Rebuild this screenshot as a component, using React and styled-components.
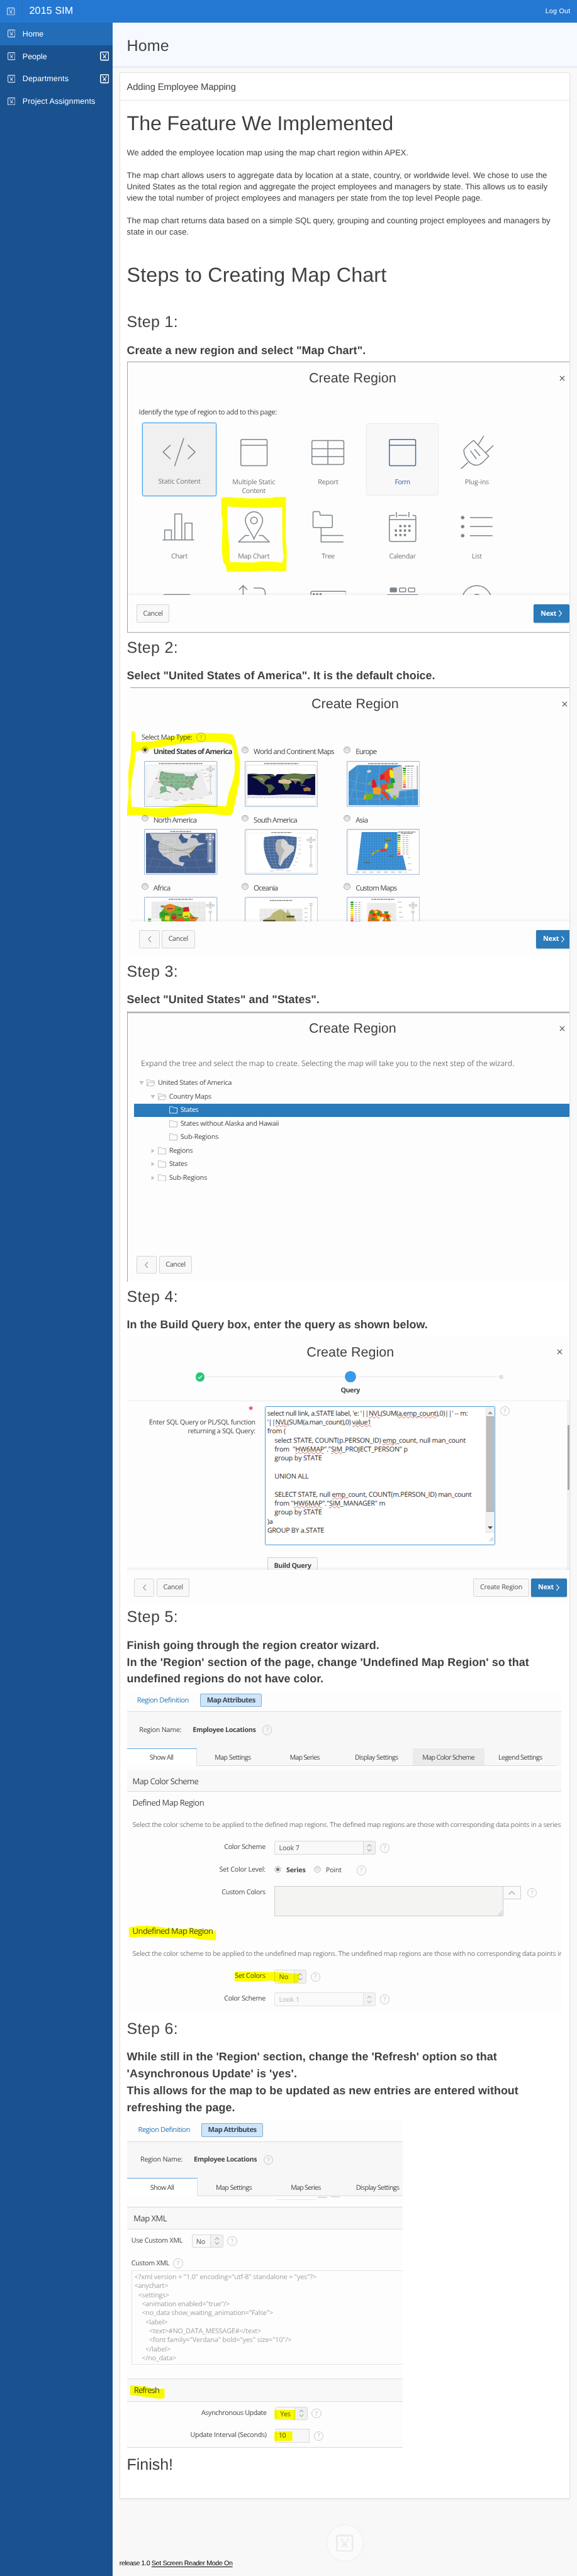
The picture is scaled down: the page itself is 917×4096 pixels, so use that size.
import React, { useLayoutEffect, useRef, useState } from "react";
import styled, { createGlobalStyle, css } from "styled-components";

const ARIAL = '"Liberation Sans", Arial, Helvetica, sans-serif';
const UI = '"Open Sans", "Noto Sans", sans-serif';

const Global = createGlobalStyle`
  html, body { margin: 0; padding: 0; background: #f8f8f8; overflow: hidden; }
  *, *::before, *::after { box-sizing: border-box; }
  body { text-rendering: geometricPrecision; font-family: ${ARIAL}; }
`;

/* ---------- text fitted to a measured width ---------- */
const FitText = styled.span`
  display: inline-block;
  white-space: pre;
  flex: none;
  text-decoration: ${(p) => (p.$link ? "underline" : "none")};
  text-underline-offset: 2px;
`;

function Fit({ w, children, ...rest }) {
  const ref = useRef(null);
  const [spacing, setSpacing] = useState(0);
  useLayoutEffect(() => {
    const el = ref.current;
    const cs = getComputedStyle(el);
    const ctx = document.createElement("canvas").getContext("2d");
    ctx.font = `${cs.fontWeight} 100px ${cs.fontFamily}`;
    const text = el.textContent;
    const natural = ctx.measureText(text).width / 100;
    setSpacing((w / parseFloat(cs.fontSize) - natural) / text.length);
  }, [w]);
  return (
    <FitText ref={ref} style={{ letterSpacing: `${spacing}em` }} {...rest}>
      {children}
    </FitText>
  );
}

/* ---------- page shell ---------- */
const Page = styled.div`
  zoom: 0.8957;
  width: 1024px;
  height: 4574px;
  display: flex;
  flex-direction: column;
  background: #f8f8f8;
  color: #404040;
`;
const TopBar = styled.header`
  height: 40px;
  flex: none;
  display: flex;
  align-items: center;
  background: #2578d2;
  color: #fff;
`;
const MenuButton = styled.div`
  width: 40px;
  height: 40px;
  display: flex;
  align-items: center;
  justify-content: center;
  border-right: 1px solid #216bbc;
`;
const Brand = styled.div`
  padding-left: 12px;
  font-size: 18px;
  flex: 1;
`;
const LogOut = styled.div`
  padding-right: 12px;
  font-size: 12px;
`;
const Columns = styled.div`
  flex: 1;
  display: flex;
  min-height: 0;
`;
const Sidebar = styled.nav`
  width: 200px;
  flex: none;
  background: #1a5290;
  color: #fff;
`;
const NavItem = styled.div`
  height: 40px;
  display: flex;
  align-items: center;
  padding: 0 7px 0 13px;
  gap: 13px;
  font-size: 14px;
  background: ${(p) => (p.$active ? "#226cb8" : "transparent")};
`;
const NavLabel = styled.div`
  flex: 1;
`;
const Main = styled.main`
  width: 824px;
  flex: none;
  display: flex;
  flex-direction: column;
`;
const TitleBar = styled.div`
  height: 79.5px;
  flex: none;
  padding: 0 25px;
  background: #f6f9ff;
  border-bottom: 1px solid #d3d8de;
  font-size: 28px;
  line-height: 84px;
`;
const Card = styled.section`
  margin: 9px 12px 0 12px;
  height: 4307px;
  flex: none;
  background: #fff;
  border: 1px solid #e3e3e3;
  border-radius: 2px;
  box-shadow: 0 2px 3px rgba(0, 0, 0, 0.06);
  overflow: hidden;
`;
const CardHeader = styled.div`
  height: 49px;
  border-bottom: 1px solid #e3e3e3;
  padding-left: 12px;
  font-size: 16.500px;
  line-height: 52px;
`;
const CardBody = styled.div`
  padding: 16.500px 0 0 12px;
`;
const H1 = styled.h1`
  margin: ${(p) => p.$m || "0"};
  font-size: 36px;
  font-weight: 400;
  line-height: 48px;
`;
const Copy = styled.p`
  margin: 0 0 20px;
  font-size: 14.400px;
  line-height: 20px;
  display: flex;
  flex-direction: column;
  align-items: flex-start;
`;
const StepTitle = styled.h2`
  margin: 0;
  height: 60px;
  padding-top: ${(p) => p.$top || 7.5}px;
  font-size: 28px;
  font-weight: 400;
  line-height: 40px;
`;
const StepText = styled.h4`
  margin: 0 0 5.500px;
  padding-top: 1.500px;
  font-size: 20px;
  font-weight: 700;
  line-height: 30px;
  display: flex;
  flex-direction: column;
  align-items: flex-start;
`;
const PageFooter = styled.footer`
  flex: 1;
  padding: 46px 12px 0;
  font-size: 12px;
  color: #000;
`;
const TopCircle = styled.div`
  width: 66px;
  height: 66px;
  margin: 0 auto;
  border: 1px solid #ececec;
  border-radius: 50%;
  background: #fbfbfb;
  display: flex;
  align-items: center;
  justify-content: center;
`;
const Release = styled.div`
  line-height: 14px;
  margin-top: -4px;
  display: flex;
  gap: 3px;
`;

function BoxGlyph({ size = 14, color = "#d7e6f6", heavy }) {
  return (
    <svg width={size} height={size} viewBox="0 0 14 14" fill="none" stroke={color} strokeWidth={heavy ? 1.5 : 1.2}>
      <rect x=".7" y=".7" width="12.6" height="12.6" rx="1.6" />
      <path d="M3.6 3.5h1.2M9.2 3.5h1.2M4.4 3.7 6.6 7.4M9.7 3.7 6.4 9M6.2 7 9 10.4M5 10.4l1-3M8 10.4l.4-3" strokeWidth="1" />
    </svg>
  );
}

/* ---------- shared dialog parts ---------- */
const Figure = styled.div`
  position: relative;
  width: ${(p) => (p.$w ? p.$w + "px" : "auto")};
  height: ${(p) => p.$h}px;
  background: #fdfdfd;
  overflow: hidden;
  display: flex;
  flex-direction: column;
  font-family: ${UI};
  font-size: 12px;
  color: #454545;
  ${(p) => p.$left && css`border-left: 1px solid #a2a2a2;`}
  ${(p) => p.$bottom && css`border-bottom: 2px solid #a8a8a8;`}
`;
const TopEdge = styled.div`
  height: ${(p) => (p.$band ? 3 : 1)}px;
  flex: none;
  margin-left: ${(p) => p.$inset || 0}px;
  background: ${(p) => (p.$band ? "#cfcfcf" : "#9d9d9d")};
  border-bottom: ${(p) => (p.$band ? "1px solid #999" : "0")};
`;
const DialogTitle = styled.div`
  height: ${(p) => p.$h}px;
  flex: none;
  width: ${(p) => p.$w}px;
  display: flex;
  align-items: flex-start;
  justify-content: center;
  font-family: ${ARIAL};
  font-size: 24px;
  line-height: 30px;
  padding-top: ${(p) => p.$top}px;
  color: #404040;
`;
const Closer = styled.svg`
  position: absolute;
  top: ${(p) => p.$y - 5}px;
  left: ${(p) => p.$x - 5}px;
`;
const CloseX = ({ x, y }) => (
  <Closer $x={x} $y={y} width="10" height="10" viewBox="0 0 10 10" stroke="#4a4a4a" strokeWidth="1.3">
    <path d="M1 1l8 8M9 1l-8 8" />
  </Closer>
);
const DialogBody = styled.div`
  height: ${(p) => p.$h}px;
  flex: none;
  overflow: hidden;
  padding-left: ${(p) => p.$pl || 0}px;
  position: relative;
  &::after {
    content: "";
    position: absolute;
    left: ${(p) => p.$inset || 0}px;
    right: 0;
    bottom: 0;
    height: 5px;
    background: linear-gradient(rgba(0, 0, 0, 0), rgba(0, 0, 0, 0.05));
    display: ${(p) => (p.$plain ? "none" : "block")};
  }
`;
const DialogFooter = styled.div`
  flex: 1;
  display: flex;
  align-items: flex-start;
  gap: 4px;
  padding-top: ${(p) => p.$top || 17}px;
  padding-left: ${(p) => p.$pl}px;
`;
const Spacer = styled.div`
  width: ${(p) => p.$w}px;
  flex: none;
`;
const Gap = styled.div`
  height: ${(p) => p.$h}px;
  flex: none;
`;
const Button = styled.div`
  width: ${(p) => p.$w}px;
  height: 32px;
  flex: none;
  display: flex;
  align-items: center;
  justify-content: center;
  gap: 3px;
  border-radius: 2px;
  border: 1px solid ${(p) => (p.$primary ? "#2873ae" : "#d6d6d6")};
  background: ${(p) => (p.$primary ? "#2b7ab9" : "#f8f8f8")};
  color: ${(p) => (p.$primary ? "#fff" : "#505050")};
  font-weight: ${(p) => (p.$primary ? 700 : 400)};
  box-shadow: ${(p) => (p.$primary ? "0 1px 2px rgba(43,122,185,.4)" : "none")};
`;
const Next = () => (
  <Button $w={63} $primary>
    <Fit w={28}>Next</Fit>
    <svg width="8" height="12" viewBox="0 0 8 12" fill="none" stroke="#fff" strokeWidth="1.3"><path d="M1.5 0.8 6 6 1.5 11.2" /></svg>
  </Button>
);
const Back = () => (
  <Button $w={36}>
    <svg width="8" height="12" viewBox="0 0 8 12" fill="none" stroke="#555" strokeWidth="1.1"><path d="M6.5 1 2 6l4.500 5" /></svg>
  </Button>
);
const Cancel = () => <Button $w={58.500}><Fit w={35}>Cancel</Fit></Button>;

const HelpCircle = styled.span`
  width: 17px;
  height: 17px;
  flex: none;
  border: 1px solid ${(p) => (p.$olive ? "#b9b544" : "#c6c6c6")};
  border-radius: 50%;
  display: inline-flex;
  align-items: center;
  justify-content: center;
  font-size: 11px;
  line-height: 15px;
  color: ${(p) => (p.$olive ? "#a5a030" : "#bcbcbc")};
  margin-left: ${(p) => p.$ml || 0}px;
`;
const Help = (p) => <HelpCircle {...p}>?</HelpCircle>;

const Radio = styled.span`
  width: 12px;
  height: 12px;
  flex: none;
  border-radius: 50%;
  border: 1px solid #a9a9a9;
  background: ${(p) => (p.$on ? "radial-gradient(circle, #444 0 2.5px, #e4e4e4 3.2px)" : "linear-gradient(#d5d5d5, #eee)")};
  opacity: ${(p) => (p.$soft ? 0.7 : 1)};
`;
const Marker = styled.svg`
  position: absolute;
  left: ${(p) => p.$x}px;
  top: ${(p) => p.$y}px;
  mix-blend-mode: multiply;
  pointer-events: none;
`;

/* ---------- step 1 ---------- */
const Prompt = styled.div`
  font-size: 12.500px;
  line-height: 20px;
  padding-left: 20px;
  height: ${(p) => p.$h}px;
`;
const TileGrid = styled.div`
  margin-left: 26px;
  display: grid;
  grid-template-columns: repeat(5, 132px);
  grid-auto-rows: 132px;
`;
const Tile = styled.div`
  margin: ${(p) => (p.$on ? 0.5 : 1.5)}px;
  border-radius: 3px;
  display: flex;
  flex-direction: column;
  align-items: center;
  padding-top: ${(p) => (p.$on ? 19 : 19)}px;
  color: #757575;
  line-height: 16px;
  border: 1px solid transparent;
  ${(p) => p.$on && css`border: 2px solid #389bea; background: #f0f0f0; box-shadow: 0 0 3px #9fd0f7;`}
  ${(p) => p.$hover && css`border-color: #ebebeb; background: #f8f8f8; color: #3c5f9c;`}
`;
const TileIcon = styled.svg`
  width: 64px;
  height: 64px;
  margin-bottom: 13px;
  flex: none;
  fill: none;
  stroke: ${(p) => p.$c || "#7d848a"};
  stroke-width: 5;
`;

/* Icons use a 192-unit box centred on the tile, three units to a pixel. */
const ICONS = {
  code: <><path d="M50 59 11 96l39 38M142 59l39 37-39 38M121 22 72 172" /></>,
  window: <><rect x="26" y="26" width="140" height="140" rx="8" /><path d="M26 57h140" /></>,
  report: <><rect x="9" y="32" width="170" height="127" rx="8" /><path d="M94 32v127M9 75h170M9 117h170" /></>,
  plug: <><path d="M79 31 160 115 128 148Q96 176 62 152Q24 116 28 80Q40 62 79 31ZM104 54 133 8M145 96 184 58M50 148 12 182M62 86l32 44M84 78l30 36" /></>,
  chart: <><path d="M8 166h168M19 165v-52h36v52M73 165V28h37v137M127 165V76h38v89" strokeLinejoin="round" /></>,
  pin: <><path d="M96 161C85 128 50 96 50 62a46 46 0 0 1 92 0c0 34-35 66-46 99z" /><circle cx="96" cy="62" r="18" /><path d="M70 142H50L14 177h164l-36-35h-20" strokeLinejoin="round" /></>,
  tree: <><path d="M15 22q0-7 7-7h22q8 0 8 7v8q0 4 4 4h55q7 0 7 7v52q0 7-7 7H22q-7 0-7-7zM58 100v77h119M58 142h119" /></>,
  calendar: <><path d="M55 35H34q-8 0-8 8v123q0 8 8 8h125q8 0 8-8V43q0-8-8-8h-10M73 35h48M26 58h141M64 17v28M130 17v28" /><g fill="#7d848a" stroke="none">{[[79, 86], [103, 86], [127, 86], [55, 110], [79, 110], [103, 110], [127, 110], [55, 134], [79, 134], [103, 134]].map(([x, y]) => <rect key={x + "-" + y} x={x} y={y} width="12" height="12" rx="2" />)}</g></>,
  list: <><path d="M60 47h120M60 95h120M60 143h120" /><g fill="#7d848a" stroke="none"><circle cx="21" cy="47" r="9" /><circle cx="21" cy="95" r="9" /><circle cx="21" cy="143" r="9" /></g></>,
  r1: <path d="M8 76q0-14 14-14h124q14 0 14 14" />,
  r2: <path d="M38 90V14M16 36l22-22 22 22M94 27h36q24 0 26 26v40" />,
  r3: <><path d="M4 80V52q0-8 8-8h172q8 0 8 8v28" /><g fill="#7d848a" stroke="none"><circle cx="19" cy="60" r="6" /><circle cx="37" cy="60" r="6" /><circle cx="55" cy="60" r="6" /></g></>,
  r4: <><rect x="31" y="27" width="33" height="20" rx="3" fill="#7d848a" /><rect x="80" y="27" width="33" height="20" rx="3" /><rect x="128" y="27" width="33" height="20" rx="3" /><path d="M16 66q0-2 4-2h154q4 0 4 2" strokeWidth="7" /></>,
  r5: <><circle cx="96" cy="92" r="78" /><circle cx="96" cy="82" r="22" /></>,
};
const TILES = [
  ["code", [["Static Content", 75]], { $on: true }],
  ["window", [["Multiple Static", 76], ["Content", 42]], {}],
  ["report", [["Report", 36]], {}],
  ["window", [["Form", 27]], { $hover: true }],
  ["plug", [["Plug-ins", 43]], {}],
  ["chart", [["Chart", 29]], {}],
  ["pin", [["Map Chart", 56]], {}],
  ["tree", [["Tree", 23]], {}],
  ["calendar", [["Calendar", 47]], {}],
  ["list", [["List", 18]], {}],
  ["r1", [], {}], ["r2", [], {}], ["r3", [], {}], ["r4", [], {}], ["r5", [], {}],
];

function RegionTypes() {
  return (
    <Figure $h={481} $left $bottom>
      <TopEdge />
      <DialogTitle $w={799} $h={79} $top={13.500}><Fit w={155}>Create Region</Fit></DialogTitle>
      <CloseX x={771} y={29} />
      <DialogBody $h={334}>
        <Prompt $h={27}><Fit w={245}>Identify the type of region to add to this page:</Fit></Prompt>
        <TileGrid>
          {TILES.map(([icon, lines, flags], i) => (
            <Tile key={i} {...flags}>
              <TileIcon viewBox="0 0 192 192" $c={flags.$hover && "#3f6aa6"}>{ICONS[icon]}</TileIcon>
              {lines.map(([t, w]) => <Fit key={t} w={w}>{t}</Fit>)}
            </Tile>
          ))}
        </TileGrid>
      </DialogBody>
      <DialogFooter $pl={16}>
        <Cancel />
        <Spacer $w={638.500} />
        <Next />
      </DialogFooter>
      <Marker $x={165} $y={239} width="120" height="140" viewBox="450 335 360 420">
        <path fill="#ff0" fillRule="evenodd" d="M456 345Q470 338 500 341L600 347L720 345L745 339H800L799 480L798 560L804 620L802 735L700 732L610 738H485L480 705L468 690L460 650L458 600L463 470L456 430ZM489 388Q500 392 540 393L640 397L700 397L780 394L781 570L784 620L787 660L780 688L730 683L670 682L630 688L502 686L497 600L490 500L487 440Z" />
      </Marker>
    </Figure>
  );
}

/* ---------- step 2 ---------- */
const PromptRow = styled.div`
  display: flex;
  align-items: center;
  height: 22px;
  padding-left: 26px;
  gap: 7px;
  font-size: 12.500px;
`;
const MapGrid = styled.div`
  display: grid;
  grid-template-columns: 178px 181px 160px;
  grid-auto-rows: 121px;
  padding-left: 26px;
`;
const MapLabel = styled.div`
  height: 29px;
  display: flex;
  align-items: flex-start;
  gap: 9px;
  padding-top: 4px;
  font-size: 13px;
  line-height: 19px;
  font-weight: ${(p) => (p.$on ? 700 : 400)};
`;
const Thumb = styled.svg`
  display: block;
  margin-left: 5px;
  width: 130px;
  height: 82px;
`;
const frame = (x, y) => <rect x={x + 2} y={y + 2} width="386" height="241" rx="5" fill="#fff" stroke="#a3bcd8" strokeWidth="4" />;
const cap = (x, y, w) => <path d={`M${x} ${y}h${w}`} stroke="#555" strokeWidth="5" strokeDasharray="9 3 14 3 6 2" opacity=".75" />;
const LEG = ["#0a7a1c", "#2d9a20", "#62b425", "#a5cf1f", "#e4e81b", "#fdf100", "#fdb813", "#f7941d", "#f15a24", "#e01b24"];
const Legend = ({ x, y, n = 10, dx = 22 }) => (
  <g>
    {LEG.slice(0, n).map((c, i) => <rect key={i} x={x} y={y + i * 11} width="15" height="7" fill={c} />)}
    {LEG.slice(0, n).map((c, i) => <path key={i} d={`M${x + dx} ${y + 4 + i * 11}h38`} stroke="#9a9a9a" strokeWidth="3" strokeDasharray="12 6" />)}
  </g>
);
const Slider = ({ x, y, h = 110, pad = true }) => (
  <g stroke="#a5a5a5" fill="#f4f4f4" strokeWidth="2">
    {pad && [[0, -46], [-16, -34], [0, -34], [16, -34], [0, -22]].map(([a, b], i) => <rect key={i} x={x + a - 5} y={y + b - 4} width="10" height="8" />)}
    <path d={`M${x} ${y}v${h}`} strokeWidth="5" stroke="#cfcfcf" />
    <rect x={x - 6} y={y - 5} width="12" height="11" /><rect x={x - 6} y={y + h - 8} width="12" height="11" />
  </g>
);
const gridLines = (x0, y0, x1, y1, s) => {
  let d = "";
  for (let x = x0; x <= x1; x += s) d += `M${x} ${y0}V${y1}`;
  for (let y = y0; y <= y1; y += s) d += `M${x0} ${y}H${x1}`;
  return d;
};

const Usa = () => (
  <Thumb viewBox="93 180 390 246">
    {frame(93, 180)}{cap(172, 194, 232)}
    <rect x="103" y="202" width="370" height="213" fill="#f7f7f7" stroke="#ddd" strokeWidth="2" />
    <path d="M172 226Q280 250 396 230L440 364Q270 412 112 366Z" fill="#ececec" />
    <path d="M182 238Q240 250 304 250L312 262 330 262 358 262 368 246 376 262 358 290 352 312 346 318 352 334 338 328 332 318 306 322 286 320 266 338 254 322 228 314 200 310 184 300 174 276Z" fill="#7fb58d" stroke="#55855f" strokeWidth="2" />
    <path d="M182 316l26-2 8 26 18 6-24-2-14 4-22 8 8-14-6-12z" fill="#7fb58d" />
    <path d="M200 244v62M226 248v66M254 250v68M280 252v68M306 258v60M328 264v54M178 264h176M176 284h180M200 302h150" stroke="#a8c9b0" strokeWidth="2" fill="none" />
    <g fill="#b56d5f">{[[196, 264], [214, 272], [240, 262], [188, 292], [232, 304], [262, 332], [300, 288], [316, 268], [330, 284], [344, 266], [370, 264], [318, 296], [306, 310], [348, 326], [154, 270], [168, 290], [270, 288], [184, 236], [338, 300]].map(([x, y], i) => <rect key={i} x={x} y={y} width="11" height="5" />)}</g>
    <path d="M110 370h26M150 380h28M196 388h28M246 390h28M296 388h24M340 384h22M386 378h22M396 228h18M406 246h18M416 264h16M428 284h14" stroke="#b5b5b5" strokeWidth="3" strokeDasharray="8 2" />
    <path d="M218 342l18 6M280 348l20 8" stroke="#777" strokeWidth="3" />
    <Slider x={446} y={258} h={96} />
  </Thumb>
);
const World = () => (
  <Thumb viewBox="627 180 390 246">
    {frame(627, 180)}{cap(730, 194, 184)}
    <rect x="637" y="202" width="370" height="214" fill="#fff" stroke="#ccc" strokeWidth="2" />
    <rect x="642" y="250" width="360" height="112" fill="#08093f" />
    <path d="M642 250q20-6 60 0t60 8l10-10 20 14-20 2-34-6zM830 254l60-8 50 4 62 4v8l-60 2-100-4z" fill="#44603a" />
    <path d="M676 262q36-10 78-4l14 14-22 4-16 18 4 12 12 2-6 4-24-14-26-22-30-12z" fill="#6b7a48" /><path d="M690 268l30 2 10 16-20-6z" fill="#b09a6c" />
    <path d="M744 304l26 2 18 18-16 14-10 14-10-4-2-24-10-10z" fill="#526b34" />
    <path d="M826 260l40-8 70-2 60 8-20 14-26 4-10 20-10 10-10-16-14-2-8 16-14-18-30-8-40 0z" fill="#66784a" />
    <path d="M806 282l30-6 34 6 8 12-16 10-30-2-26-6z" fill="#d9c096" /><path d="M826 300l36 2 4 12-10 20-12 4-8-22z" fill="#5f7a3f" />
    <path d="M868 274l44 2 20 6-24 2-36-2z" fill="#c7b184" /><path d="M938 326l22-8 18 8-2 16-16-2-18 2z" fill="#a5764a" /><path d="M918 304l20 4 20 6-30-2z" fill="#52703c" />
    <path d="M642 362q30-4 60 2t60 0 70-6 80 0 90 4v12H642z" fill="#e6e9f1" /><path d="M770 246l24-4 10 4-14 14z" fill="#fff" />
    <path d="M642 376h360" stroke="#ccc" strokeWidth="4" strokeDasharray="16 5" />
  </Thumb>
);
const Europe = () => (
  <Thumb viewBox="1170 180 390 246">
    {frame(1170, 180)}{cap(1284, 194, 160)}
    <path d="M1226 202H1460V416H1180V238Z" fill="#3f8fcd" /><path d="M1440 330h110v86H1440z" fill="#3f8fcd" />
    <path d="M1180 330q180 40 370 0M1180 280q180 60 370 0M1180 380q180 10 370-10M1230 202q-20 100 0 214M1290 202q-30 100-10 214M1350 202q-20 110 0 214M1240 230l-60 170M1480 330l10 86M1520 330l6 86" stroke="#86bbe2" strokeWidth="1.500" fill="none" />
    <path d="M1416 218l50-14h84v124l-100 12-4 34-36 2-24-34 28-40z" fill="#c7c7c9" />
    <path d="M1396 218l16 0 4 16-12 10-2 26-8 26-14-2-10-18-22 2v-22l14-10z" fill="#e8401f" /><path d="M1348 256l22-4 2 24-22 6z" fill="#e01b24" />
    <path d="M1398 226l18 4 6 34-16 8-8-14z" fill="#f1ea1c" /><path d="M1404 272l20 2 4 22-22 4z" fill="#169a34" />
    <path d="M1306 282l12-4 10 26 2 14-26 4z" fill="#e01b24" /><path d="M1286 294l14-4-2 18-14-2z" fill="#7fa870" />
    <path d="M1308 326l34-10 12 14-6 30-36-4z" fill="#f7a01d" /><path d="M1276 352l38 4-10 30-36 0-6-18z" fill="#6cb522" /><path d="M1264 362l10-4-4 28-10-4z" fill="#f7a01d" />
    <path d="M1350 306l34-4 4 26-30 12z" fill="#ea4a22" /><path d="M1384 304l34-4 2 24-30 4z" fill="#5cae2c" /><path d="M1352 346l24-4 22 40-8 8-20-26z" fill="#e8401f" /><path d="M1352 374l10 0-2 16-8-4z" fill="#e8401f" />
    <path d="M1376 330l40 2-10 14-28 0z" fill="#cfe043" /><path d="M1416 362l20 4-4 22-16-6z" fill="#7ec02a" /><path d="M1276 234l18-8 8 12-18 6z" fill="#c5d3dc" />
    <rect x="1466" y="200" width="76" height="128" fill="#fff" />
    <Legend x={1470} y={216} />{cap(1480, 208, 48)}
  </Thumb>
);
const NorthAm = () => (
  <Thumb viewBox="93 543 390 246">
    {frame(93, 543)}{cap(232, 557, 112)}
    <rect x="103" y="565" width="370" height="214" fill="#45608e" />
    <path d="M103 700q180 20 370 0M103 740q180 20 370 0M103 650q180 10 370 0M140 690L110 779M180 720l-30 59M240 740l-10 39M310 740v39M360 680l30 99M400 650l70 129M150 565q-40 60-47 120" stroke="#7288b0" strokeWidth="1.500" fill="none" />
    <path d="M124 568H290L276 590 296 620 320 616 330 590 370 592 384 616 420 620 372 636 350 660 334 674 340 700 326 684 290 688 278 700 280 718 308 722 300 742 250 728 220 700 196 688 172 660 168 632 176 610 140 600Z" fill="#c9cacc" />
    <path d="M292 570l60 0-20 28-26-8zM350 570l40 0-14 10z" fill="#d9dadc" />
    <path d="M168 634L288 660 372 636M176 620L292 662 352 648M186 680L290 656 340 680M172 650L300 664" stroke="#8b887c" strokeWidth="2" fill="none" /><path d="M360 632l-16 34-20 6 14 20" stroke="#d7ad45" strokeWidth="4" fill="none" strokeDasharray="8 3" />
    <path d="M172 640h160M180 662h150M220 634v70M250 640v80M196 592h60v34h-60z" stroke="#e4e4e4" strokeWidth="2" fill="none" />
    <path d="M420 570h46v34H420zM430 606h30v116h-30z" fill="#8597b8" /><Slider x={444} y={622} h={92} />
  </Thumb>
);
const SouthAm = () => (
  <Thumb viewBox="625 543 394 246">
    <rect x="627" y="545" width="390" height="241" rx="9" fill="#fff" stroke="#a3bcd8" strokeWidth="4" />{cap(768, 561, 108)}
    <rect x="637" y="565" width="370" height="212" fill="none" stroke="#e3e3e3" strokeWidth="2" />
    <path d="M730 586Q814 572 904 586Q908 680 862 752Q810 760 768 754Q716 670 730 586Z" fill="#4a6a9a" />
    <path d="M732 600h170M728 616h176M728 632h174M730 648h170M734 664h162M738 680h154M744 696h142M750 712h128M756 728h116M762 742h104M750 582q0 100 36 172M778 580q0 100 20 174M880 582q0 100-34 172M850 582v170" stroke="#9fb2cf" strokeWidth="1.500" fill="none" strokeDasharray="12 4" />
    <path d="M800 600l34-4 20 16 4 12 34 12-4 24-16 14-20 20-16 14-8 16-10 18-8-8 4-40-4-26-18-22-2-24z" fill="#d7d7d7" /><path d="M796 604l28-4-4 34 20 24-14 24-14 58-6-10 2-42-18-30z" fill="#b6b6b8" />
    <path d="M912 590h14M914 606h14M914 628h14M914 652h14M912 676h14M902 698h12M896 720h14M886 738h12M760 768h22M792 763h44M850 768h22" stroke="#aaa" strokeWidth="3" strokeDasharray="7 2" />
    <Slider x={981} y={636} h={106} />
  </Thumb>
);
const Asia = () => (
  <Thumb viewBox="1170 543 390 246">
    {frame(1170, 543)}
    <rect x="1180" y="552" width="370" height="228" fill="none" stroke="#ececec" strokeWidth="2" />
    <path d="M1250 560H1440L1488 762H1226Z" fill="#3389cf" />
    <clipPath id="asiaClip"><path d="M1250 560H1440L1488 762H1226Z" /></clipPath>
    <path clipPath="url(#asiaClip)" d={gridLines(1226, 560, 1490, 762, 14)} stroke="#62a6dd" strokeWidth="1.500" />
    <path d="M1372 606l18-16 20 8-14 10-22 4z" fill="#7b9a3e" /><path d="M1374 622l12-4 4 16-10 18-8-2z" fill="#f6dd2b" /><path d="M1352 650l26-2 4 12-18 4-14-2z" fill="#ec3323" /><path d="M1304 676l20-18 20-2-8 8-22 10-6 12z" fill="#e2b52e" /><path d="M1318 662l16-4-4 8-12 4z" fill="#46a135" />
    <path d="M1264 723h32M1394 688h26M1372 604h36" stroke="#5b6770" strokeWidth="6" />
    <rect x="1440" y="552" width="100" height="132" fill="#fff" /><Legend x={1441} y={574} dx={26} />{cap(1444, 560, 92)}{cap(1460, 567, 60)}
    <path d="M1216 773h272" stroke="#b5b5b5" strokeWidth="4" strokeDasharray="20 18" /><path d="M1492 696h18M1496 728h18M1498 762h20" stroke="#b5b5b5" strokeWidth="3" />
  </Thumb>
);
const Africa = () => (
  <Thumb viewBox="93 906 390 246">
    {frame(93, 906)}{cap(224, 919, 128)}
    <rect x="134" y="934" width="286" height="200" fill="#ececec" /><path d={gridLines(134, 934, 420, 1134, 28)} stroke="#e0e0e0" strokeWidth="2" />
    <path d="M206 952l24-8 28 8 46 14 26-4 4 26 24 24 24 4-30 40H200l-24-34-2-26 16-18z" fill="#5cae2c" />
    <path d="M208 950l24-6 26 8-2 24-30 16-24-20z" fill="#f07f22" /><path d="M302 962l28-2 4 24-32 2z" fill="#e01b24" /><path d="M182 952h20v10h-20z" fill="#8a7a60" />
    <path d="M300 986l34-2 6 30-30 6-12-10z" fill="#f6e51c" /><path d="M336 1006l26 8 20 4-20 20-30-6z" fill="#ea7a25" /><path d="M204 1008l26 2-2 24-24-4z" fill="#f6d51c" /><path d="M238 1006l30-2-8 28-20-6z" fill="#d8322a" /><path d="M254 1024l44-6 16 18-60 2z" fill="#ee5a24" /><path d="M176 990l26-8 2 34-22-4z" fill="#2e9e2c" />
    <path d="M216 969h30M270 974h18M306 972h24M202 997h20M240 999h22M274 1002h22M308 1010h20M240 1018h24M342 1018h20" stroke="#585040" strokeWidth="5" />
    <rect x="113" y="1021" width="72" height="20" fill="#fff" opacity=".8" /><rect x="114" y="1022" width="16" height="6" fill="#0a7a1c" /><rect x="114" y="1033" width="16" height="6" fill="#2d9a20" />
    <Slider x={446} y={986} h={120} />
  </Thumb>
);
const Oceania = () => (
  <Thumb viewBox="625 906 394 246">
    <rect x="627" y="908" width="390" height="241" rx="9" fill="#fff" stroke="#a3bcd8" strokeWidth="4" />{cap(760, 924, 122)}
    <rect x="706" y="970" width="230" height="150" fill="#ececec" /><path d={gridLines(706, 970, 936, 1120, 30)} stroke="#dedede" strokeWidth="2" />
    <path d="M726 1040v-12l38-18 14-20 24-12 12-6 14 4 10 12 12 2 6-18 8 20 12 14 20 18 10 22v20H726z" fill="#beb878" /><path d="M835 980v60M866 990v50" stroke="#96905a" strokeWidth="2" />
    <path d="M850 1011h42M724 1034h66" stroke="#4d4a38" strokeWidth="9" /><path d="M946 968h16M946 990h16M946 1014h16M946 1034h16" stroke="#aaa" strokeWidth="3" />
    <Slider x={981} y={945} h={120} pad={false} />
  </Thumb>
);
const Custom = () => (
  <Thumb viewBox="1170 906 390 246">
    {frame(1170, 906)}{cap(1302, 919, 124)}
    <rect x="1278" y="938" width="156" height="180" fill="#ececec" />
    <Legend x={1191} y={932} />
    <path d="M1290 988q4-14 20-14l6 6 18-6 20 8 6 14 24 0 18 6 4 12-10 0 10 22-8 20h-30l-8-20 12-20-16-4-12 14-4 26-36 10-22-18 2-24z" fill="#e2711f" />
    <path d="M1290 988l14-10 12 12-14 8zM1340 984l10 8-10 14-12-6zM1302 1016l22 4-6 12-18-6zM1368 984l24 0-4 14-16-2zM1378 1016l16 2-8 14z" fill="#2e9a2c" />
    <path d="M1318 982l14-4 2 12-14 6zM1332 1010l22-2-8 20-12-4zM1396 996l12 6-8 10zM1372 1020l14 6-8 10z" fill="#f1e11c" /><path d="M1304 996l22-2-4 14-14 2zM1340 1000l18 2-8 10zM1382 1000l16 6-6 14-14-8z" fill="#dd2a24" />
    <path d="M1442 934h20M1446 962h18M1448 988h16M1450 1014h20" stroke="#aaa" strokeWidth="3" /><Slider x={1523} y={986} h={120} />
  </Thumb>
);
const MAPS = [
  ["United States of America", 140, Usa], ["World and Continent Maps", 143, World], ["Europe", 37, Europe],
  ["North America", 77, NorthAm], ["South America", 77, SouthAm], ["Asia", 21.500, Asia],
  ["Africa", 30, Africa], ["Oceania", 43, Oceania], ["Custom Maps", 73, Custom],
];

function MapTypes() {
  return (
    <Figure $h={478}>
      <TopEdge $inset={6} />
      <DialogTitle $w={810} $h={77} $top={13.500}><Fit w={155}>Create Region</Fit></DialogTitle>
      <CloseX x={777} y={29} />
      <DialogBody $h={337} $inset={6}>
        <PromptRow><Fit w={90}>Select Map Type:</Fit><Help $olive /></PromptRow>
        <Gap $h={1} />
        <MapGrid>
          {MAPS.map(([name, w, Pic], i) => (
            <div key={name}>
              <MapLabel $on={i === 0}><Radio $on={i === 0} /><Fit w={w}>{name}</Fit></MapLabel>
              <Pic />
            </div>
          ))}
        </MapGrid>
      </DialogBody>
      <DialogFooter $pl={22} $top={16}>
        <Back /><Cancel /><Spacer $w={598} /><Next />
      </DialogFooter>
      <Marker $x={0} $y={69} width="205" height="165" viewBox="0 0 615 495">
        <path fill="#ff0" fillRule="evenodd" d="M24 27H42L46 82Q150 84 250 52Q350 30 440 36Q530 36 564 44L580 90L590 140L602 190L598 290L580 380L562 465Q550 478 520 474Q430 462 380 464Q300 470 200 486L60 474L0 476V440L8 360L6 250L20 150ZM46 132Q150 116 200 106Q300 90 400 84Q520 80 545 92L556 100L566 130L574 200L572 250L560 300L540 360L527 425Q450 422 400 412Q320 408 240 430Q150 442 60 430L22 428L18 350L30 250L40 200Z" />
      </Marker>
    </Figure>
  );
}

/* ---------- step 3 ---------- */
const Hint = styled.div`
  font-size: 13.500px;
  line-height: 20px;
  color: #7a7a7a;
  height: 33px;
  padding-left: 24px;
`;
const TreeRow = styled.div`
  height: 24px;
  margin-left: 12px;
  padding-left: ${(p) => 7 + p.$level * 20}px;
  display: flex;
  align-items: center;
  gap: 5px;
  background: ${(p) => (p.$on ? "#2b7ab9" : "transparent")};
  color: ${(p) => (p.$on ? "#fff" : "#454545")};
`;
const TREE = [
  [0, "open", "United States of America", 131],
  [1, "open", "Country Maps", 75],
  [2, "leaf", "States", 32, true],
  [2, "leaf", "States without Alaska and Hawaii", 175],
  [2, "leaf", "Sub-Regions", 67.500],
  [1, "shut", "Regions", 42],
  [1, "shut", "States", 32],
  [1, "shut", "Sub-Regions", 67.500],
];
const Folder = ({ open, color }) => (
  <svg width="15" height="13" viewBox="0 0 15 13" fill="none" stroke={color} strokeWidth="1">
    {open ? <path d="M.5 12V1h5l1.500 2h6v3M.5 12h11.500l2.500-6.500h-11z" /> : <path d="M.5 12.300V.8h5l2 2h6.500v9.500z" />}
  </svg>
);
const Arrow = ({ kind }) => (
  <svg width="10" height="9" viewBox="0 0 10 9" fill="#c3c3c3">
    {kind === "open" && <path d="M1.500 1h8l-4 7z" />}
    {kind === "shut" && <path d="M3 .5v8l5.500-4z" />}
  </svg>
);
function MapTree() {
  return (
    <Figure $h={480} $left>
      <TopEdge $band />
      <DialogTitle $w={799} $h={79.500} $top={13}><Fit w={155}>Create Region</Fit></DialogTitle>
      <CloseX x={771} y={31} />
      <DialogBody $h={351} $plain>
        <Hint><Fit w={663}>Expand the tree and select the map to create. Selecting the map will take you to the next step of the wizard.</Fit></Hint>
        {TREE.map(([level, kind, name, w, on], i) => (
          <TreeRow key={i} $level={level} $on={on}>
            <Arrow kind={kind} />
            <Folder open={kind === "open"} color={on ? "#fff" : "#b3b3b3"} />
            <Fit w={w}>{name}</Fit>
          </TreeRow>
        ))}
      </DialogBody>
      <DialogFooter $pl={16} $top={0.5}><Back /><Cancel /></DialogFooter>
    </Figure>
  );
}

/* ---------- step 4 ---------- */
const Progress = styled.div`
  height: 20px;
  flex: none;
  display: flex;
  align-items: center;
  padding-left: 122px;
`;
const Dot = styled.div`
  width: ${(p) => p.$d}px;
  height: ${(p) => p.$d}px;
  border-radius: 50%;
  background: ${(p) => p.$c};
  flex: none;
  display: flex;
  align-items: center;
  justify-content: center;
`;
const Track = styled.div`
  width: ${(p) => p.$w}px;
  height: 2px;
  background: #f1f1f1;
  margin: 0 3px;
`;
const StepLabel = styled.div`
  height: 32px;
  flex: none;
  width: 793px;
  text-align: center;
  font-weight: 700;
  line-height: 20px;
  padding-top: 5px;
`;
const QueryArea = styled.div`
  display: flex;
  padding-top: 9px;
  height: 257px;
`;
const QueryLabel = styled.div`
  width: 228px;
  display: flex;
  flex-direction: column;
  align-items: flex-end;
  line-height: 16px;
  padding-top: 21px;
  margin-right: 17px;
  position: relative;
`;
const Star = styled.span`
  position: absolute;
  right: 4px;
  top: -2px;
  color: #e0344a;
  font-size: 15px;
  font-weight: 700;
`;
const SqlBox = styled.div`
  width: 409px;
  height: 247px;
  border: 1px solid #4a9bd6;
  border-radius: 2px;
  background: #fff;
  display: flex;
`;
const SqlText = styled.div`
  flex: 1;
  padding: 4px 0 0 3px;
  color: #2c2c2c;
`;
const SqlLine = styled.div`
  height: 16px;
  line-height: 16px;
  padding-left: ${(p) => p.$in || 0}px;
  u { text-decoration: underline wavy #d96060 0.8px; text-underline-offset: 0; text-decoration-skip-ink: none; }
`;
const SqlScroll = styled.div`
  width: 17px;
  background: #f1f1f1;
  display: flex;
  flex-direction: column;
  align-items: center;
`;
const ScrollThumb = styled.div`
  width: 13px;
  height: 171px;
  margin: 4px 0 26px;
  background: #bcbcbc;
  border: 1px solid #aaa;
`;
const Corner = styled.div`
  margin-top: 5px;
  flex: 1;
  align-self: stretch;
  background: #fff;
  border-top: 1px solid #ddd;
`;
const SideScroll = styled.div`
  position: absolute;
  right: 0;
  top: 0;
  width: 5px;
  height: 100%;
  background: #f1f1f1;
  padding: 43px 0 0 1.500px;
  &::before { content: ""; display: block; height: 114px; background: #a9a9a9; }
`;
const BuildButton = styled.div`
  margin: 0 0 0 249px;
  width: 90px;
  height: 32px;
  border: 1px solid #d0d0d0;
  border-radius: 2px;
  background: #f8f8f8;
  display: flex;
  align-items: center;
  justify-content: center;
  font-weight: 700;
`;
const QueryBody = styled(DialogBody)`
  border-top: 2px solid #ececec;
`;
const SQL = [
  [0, 356, <>select null link, a.STATE label, 'e: '||<u>NVL</u>(SUM(<u>a.emp_count</u>),0)||' -- m:</>],
  [0, 184.500, <>'||<u>NVL</u>(SUM(a.man_count),0) <u>value1</u></>],
  [0, 32.600, "from ("],
  [13, 339.500, <>select STATE, COUNT(p.PERSON_ID) <u>emp</u>_count, null man_count</>],
  [13, 236.500, <>from  "<u>HW6MAP</u>"."<u>SIM</u>_PROJECT_PERSON" p</>],
  [13, 84, "group by STATE"],
  [0, 0, null],
  [13, 60.500, "UNION ALL"],
  [0, 0, null],
  [13, 350, <>SELECT STATE, null <u>emp</u>_count, COUNT(m.PERSON_ID) man_count</>],
  [13, 196.500, <>from "<u>HW6MAP</u>"."<u>SIM</u>_MANAGER" m</>],
  [13, 84, "group by STATE"],
  [0, 10, ")a"],
  [0, 101, "GROUP BY a.STATE"],
];
function QueryStep() {
  return (
    <Figure $h={472}>
      <DialogTitle $w={793} $h={62} $top={13}><Fit w={155}>Create Region</Fit></DialogTitle>
      <CloseX x={768.500} y={28} />
      <Progress>
        <Dot $d={16} $c="#28c67d"><svg width="9" height="8" viewBox="0 0 9 8" fill="none" stroke="#fff" strokeWidth="1.400"><path d="M1 4.200 3.300 6.500 8 1.200" /></svg></Dot>
        <Track $w={243} /><Dot $d={20} $c="#3b99e8" /><Track $w={247} /><Dot $d={8} $c="#e2e2e2" />
      </Progress>
      <StepLabel><Fit w={34}>Query</Fit></StepLabel>
      <QueryBody $h={300}>
        <QueryArea>
          <QueryLabel>
            <Star>*</Star>
            <Fit w={189}>Enter SQL Query or PL/SQL function</Fit>
            <Fit w={120}>returning a SQL Query:</Fit>
          </QueryLabel>
          <SqlBox>
            <SqlText>
              {SQL.map(([ind, w, t], i) => <SqlLine key={i} $in={ind}>{t && <Fit w={w}>{t}</Fit>}</SqlLine>)}
            </SqlText>
            <SqlScroll>
              <Gap $h={8} />
              <svg width="9" height="5" viewBox="0 0 9 5" fill="#9a9a9a"><path d="M4.500 0 9 5H0z" /></svg>
              <ScrollThumb />
              <svg width="9" height="5" viewBox="0 0 9 5" fill="#505050"><path d="M4.500 5 9 0H0z" /></svg>
              <Corner><svg width="16" height="17" viewBox="0 0 16 17" stroke="#888"><path d="M8 15l6-7M12 15l3-3.500" /></svg></Corner>
            </SqlScroll>
          </SqlBox>
          <Help $ml={8} />
        </QueryArea>
        <Gap $h={19.5} />
        <BuildButton><Fit w={66}>Build Query</Fit></BuildButton>
        <SideScroll />
      </QueryBody>
      <DialogFooter $pl={13} $top={16}>
        <Back /><Cancel /><Spacer $w={495.500} /><Button $w={98.500}><Fit w={75}>Create Region</Fit></Button><Next />
      </DialogFooter>
    </Figure>
  );
}

/* ---------- steps 5 and 6 ---------- */
const Crumbs = styled.div`
  height: ${(p) => p.$h}px;
  flex: none;
  display: flex;
  align-items: center;
  padding: 0 0 ${(p) => p.$pb}px ${(p) => p.$pl}px;
  gap: 20px;
  font-size: 12.500px;
  color: #2a78b8;
`;
const Pill = styled.div`
  width: 110px;
  height: 24px;
  display: flex;
  align-items: center;
  justify-content: center;
  border: 1px solid #86abc9;
  border-radius: 2px;
  background: #cfe5f9;
  color: #3c4a56;
  font-weight: 700;
`;
const NameBar = styled.div`
  height: ${(p) => p.$h}px;
  flex: none;
  display: flex;
  align-items: center;
  padding-left: ${(p) => p.$pl}px;
  background: #f7f7f7;
  border-top: 1px solid #dcdcdc;
  b { margin: 0 12px 0 20px; }
`;
const Tabs = styled.div`
  height: 32px;
  flex: none;
  display: flex;
  background: #f7f7f7;
`;
const Tab = styled.div`
  width: 127.600px;
  flex: none;
  display: flex;
  align-items: center;
  justify-content: center;
  padding-top: 4px;
  border-bottom: 1px solid #dcdcdc;
  background: ${(p) => (p.$hot ? "#ebebeb" : "transparent")};
  ${(p) => p.$on && css`
    width: ${p.$on}px;
    background: #fff;
    border-top: 2px solid #5ea5e2;
    border-right: 1px solid #dcdcdc;
    border-bottom: 0;
    padding-top: 2px;
  `}
`;
const Band = styled.div`
  height: ${(p) => p.$h}px;
  flex: none;
  display: flex;
  align-items: center;
  padding: ${(p) => p.$pt || 0}px 0 0 ${(p) => p.$pl}px;
  background: #f8f8f8;
  border-top: ${(p) => (p.$line ? "1px solid #dcdcdc" : "0")};
  border-bottom: 1px solid #dcdcdc;
  font-size: 14.500px;
`;
const Line = styled.div`
  height: ${(p) => p.$h}px;
  flex: none;
  display: flex;
  align-items: center;
  padding-left: ${(p) => p.$pl || 10}px;
  font-size: ${(p) => p.$size || 12}px;
  color: ${(p) => p.$c || "#454545"};
`;
const Row = styled.div`
  height: ${(p) => p.$h || 40}px;
  flex: none;
  display: flex;
  align-items: ${(p) => (p.$start ? "flex-start" : "center")};
  padding-top: ${(p) => p.$pt || 0}px;
`;
const RowLabel = styled.div`
  width: ${(p) => p.$w || 246}px;
  flex: none;
  display: flex;
  justify-content: flex-end;
  margin-right: 16px;
  line-height: 24px;
`;
const Select = styled.div`
  width: ${(p) => p.$w}px;
  height: 24px;
  flex: none;
  display: flex;
  align-items: stretch;
  line-height: 25px;
  border: 1px solid #d9d9d9;
  border-radius: 2px;
  background: #f9f9f9;
  padding-left: 7px;
  margin-right: 7px;
  color: ${(p) => (p.$off ? "#aaa" : "#505050")};
  opacity: ${(p) => (p.$off ? 0.8 : 1)};
`;
const Stepper = styled.div`
  margin-left: auto;
  width: 22px;
  border-left: 1px solid #d9d9d9;
  background: #f1f1f1;
  display: flex;
  align-items: center;
  justify-content: center;
`;
const Picker = ({ w, tw, children, off }) => (
  <Select $w={w} $off={off}>
    <Fit w={tw}>{children}</Fit>
    <Stepper><svg width="9" height="14" viewBox="0 0 9 14" fill="none" stroke="#777"><path d="M1 5l3.500-4L8 5M1 9l3.500 4L8 9" /></svg></Stepper>
  </Select>
);
const Group = styled.div`
  display: flex;
  align-items: center;
  gap: ${(p) => p.$gap}px;
  margin-left: ${(p) => p.$ml || 0}px;
  ${Radio} { margin-bottom: 4px; }
`;
const GrayArea = styled.div`
  width: 406.500px;
  height: 54px;
  border: 1px solid #cdcdcd;
  background: #f4f4f3;
  display: flex;
  align-items: flex-end;
  justify-content: flex-end;
`;
const UpButton = styled.div`
  width: 31px;
  height: 24px;
  border: 1px solid #d0d0d0;
  border-left: 0;
  background: #fafafa;
  display: flex;
  align-items: center;
  justify-content: center;
  margin-right: 11px;
`;

function Head({ shift, tabs, crumb, pb, name }) {
  return (
    <>
      <Crumbs $h={crumb} $pb={pb} $pl={18 + shift}><Fit w={92}>Region Definition</Fit><Pill><Fit w={86}>Map Attributes</Fit></Pill></Crumbs>
      <NameBar $h={name} $pl={22 + shift}><Fit w={75}>Region Name:</Fit><b><Fit w={112}>Employee Locations</Fit></b><Help /></NameBar>
      <Tabs>
        <Tab $on={124 + shift}><Fit w={42}>Show All</Fit></Tab>
        {tabs.map(([t, w, hot]) => <Tab key={t} $hot={hot}><Fit w={w}>{t}</Fit></Tab>)}
      </Tabs>
    </>
  );
}
const TABS = [["Map Settings", 64], ["Map Series", 53], ["Display Settings", 77], ["Map Color Scheme", 92.500, true], ["Legend Settings", 78]];

function ColorScheme() {
  return (
    <Figure $h={574} $w={770.500}>
      <Head shift={0} tabs={TABS} crumb={37} pb={3} name={65} />
      <Gap $h={8} />
      <Band $h={37} $pl={10} $pt={2}><Fit w={117}>Map Color Scheme</Fit></Band>
      <Line $h={40} $size={14.500}><Fit w={127}>Defined Map Region</Fit></Line>
      <Line $h={40} $c="#7a7a7a"><Fit w={761}>Select the color scheme to be applied to the defined map regions. The defined map regions are those with corresponding data points in a series</Fit></Line>
      <Row><RowLabel><Fit w={73.500}>Color Scheme</Fit></RowLabel><Picker w={180} tw={36}>Look 7</Picker><Help /></Row>
      <Row>
        <RowLabel><Fit w={82}>Set Color Level:</Fit></RowLabel>
        <Group $gap={9}><Radio $on $soft /><b><Fit w={34}>Series</Fit></b></Group>
        <Group $gap={9} $ml={15}><Radio $soft /><Fit w={28}>Point</Fit></Group>
        <Help $ml={27} />
      </Row>
      <Gap $h={8} />
      <Row $h={70} $start>
        <RowLabel><Fit w={78}>Custom Colors</Fit></RowLabel>
        <GrayArea><svg width="12" height="12" viewBox="0 0 12 12" stroke="#aaa"><path d="M3 11l7-8M7 11l4-4" /></svg></GrayArea>
        <UpButton><svg width="12" height="8" viewBox="0 0 12 8" fill="none" stroke="#555"><path d="M1 7l5-5.500L11 7" /></svg></UpButton>
        <Row $h={24}><Help /></Row>
      </Row>
      <Line $h={19} $size={14.500}><Fit w={143}>Undefined Map Region</Fit></Line>
      <Gap $h={22} />
      <Line $h={20} $c="#7a7a7a"><Fit w={765}>Select the color scheme to be applied to the undefined map regions. The undefined map regions are those with no corresponding data points in</Fit></Line>
      <Gap $h={10} />
      <Row><RowLabel><Fit w={54.500}>Set Colors</Fit></RowLabel><Picker w={57} tw={16.500}>No</Picker><Help /></Row>
      <Row><RowLabel><Fit w={73.500}>Color Scheme</Fit></RowLabel><Picker w={180} tw={36} off>Look 1</Picker><Help /></Row>
      <Marker $x={3} $y={416} width="158" height="28" viewBox="0 0 158 28">
        <path fill="#ff0" d="M1 4Q30-1 55 3Q80 8 110 6Q135 7 150 10H156L155 27Q130 27 110 22Q80 25 55 21Q25 20 1 22Z" />
      </Marker>
      <Marker $x={190} $y={498} width="116" height="22" viewBox="0 0 116 22">
        <path fill="#ff0" d="M1 1H28L80 2L116 5L114 21H82L66 17L30 19L1 18Z" />
      </Marker>
    </Figure>
  );
}

const XmlBox = styled.div`
  margin-left: 8.500px;
  height: 167px;
  flex: none;
  border: 1px solid #e2e5e2;
  border-right: 0;
  padding: 3px 0 0 4px;
  color: #a2a2a2;
`;
const XmlLine = styled.div`
  height: 16px;
  line-height: 16px;
  padding-left: ${(p) => p.$in}px;
`;
const SmallInput = styled.div`
  width: 60px;
  height: 24px;
  border: 1px solid #d9d9d9;
  background: #f7f7f7;
  padding-left: 4px;
  line-height: 23px;
  margin-right: 8px;
`;
const Residue = styled.div`
  height: 19px;
  flex: none;
  display: flex;
  padding-left: 264px;
  align-items: flex-start;
`;
const Scrap = styled.div`
  width: ${(p) => p.$w}px;
  height: ${(p) => p.$h}px;
  margin-right: ${(p) => p.$mr || 0}px;
  background: ${(p) => p.$bg};
  border-bottom: 1px solid ${(p) => p.$c};
`;
const EndRule = styled.div`
  margin-top: auto;
  height: 1px;
  flex: none;
  background: #d8d8d8;
`;
const XML = [
  [0, 323, '<?xml version = "1.0" encoding="utf-8" standalone = "yes"?>'],
  [0, 59.500, "<anychart>"],
  [6.500, 55, "<settings>"],
  [13, 156, '<animation enabled="true"/>'],
  [13, 233, '<no_data show_waiting_animation="False">'],
  [19.500, 39, "<label>"],
  [26, 199, "<text>#NO_DATA_MESSAGE#</text>"],
  [26, 253, '<font family="Verdana" bold="yes" size="10"/>'],
  [19.500, 44.500, "</label>"],
  [13, 61, "</no_data>"],
];
function RefreshStep() {
  return (
    <Figure $h={583} $w={490}>
      <Head shift={2} tabs={TABS.slice(0, 3)} crumb={39} pb={1} name={65} />
      <Residue><Scrap $w={72} $h={7} $mr={3} $bg="#fff" $c="#e6e6e6" /><Scrap $w={17} $h={4} $mr={6} $bg="#eef3ee" $c="#c3d3c3" /><Scrap $w={16} $h={3} $bg="#ececec" $c="#d5d5d5" /></Residue>
      <Band $h={40.500} $pl={12} $line><Fit w={59}>Map XML</Fit></Band>
      <Row $h={41.500}><Spacer $w={8} /><RowLabel $w={91}><Fit w={91}>Use Custom XML</Fit></RowLabel><Picker w={56.500} tw={16}>No</Picker><Help /></Row>
      <Row $h={31.500} $pt={6}><Spacer $w={8} /><Fit w={67.500}>Custom XML</Fit><Help $ml={7} /></Row>
      <XmlBox>{XML.map(([ind, w, t], i) => <XmlLine key={i} $in={ind}><Fit w={w}>{t}</Fit></XmlLine>)}</XmlBox>
      <Gap $h={24.500} />
      <Band $h={41.500} $pl={12.500} $line><Fit w={45}>Refresh</Fit></Band>
      <Row $h={41}><RowLabel $w={248}><Fit w={116}>Asynchronous Update</Fit></RowLabel><Picker w={57} tw={18}>Yes</Picker><Help /></Row>
      <Row $h={39}><RowLabel $w={248}><Fit w={135.500}>Update Interval (Seconds)</Fit></RowLabel><SmallInput><Fit w={13}>10</Fit></SmallInput><Help /></Row>
      <EndRule />
      <Marker $x={6} $y={471} width="62" height="25" viewBox="0 0 62 25">
        <path fill="#ff0" d="M0 1L28 3L40 7L61 7V23Q55 26 46 24L0 18Z" />
      </Marker>
      <Marker $x={262} $y={516} width="38" height="18" viewBox="0 0 38 18"><path fill="#ff0" d="M0 0H37V18L28 16H0Z" /></Marker>
      <Marker $x={262} $y={554} width="32" height="18" viewBox="0 0 32 18"><path fill="#ff0" d="M0 1L8 0H32V17H0Z" /></Marker>
    </Figure>
  );
}

/* ---------- page ---------- */
const NAV = [["Home", 37.500, true], ["People", 43.500, false, true], ["Departments", 82, false, true], ["Project Assignments", 130]];

export default function App() {
  return (
    <>
      <Global />
      <Page>
        <TopBar>
          <MenuButton><BoxGlyph /></MenuButton>
          <Brand><Fit w={78}>2015 SIM</Fit></Brand>
          <LogOut><Fit w={44.500}>Log Out</Fit></LogOut>
        </TopBar>
        <Columns>
          <Sidebar>
            {NAV.map(([name, w, active, more]) => (
              <NavItem key={name} $active={active}>
                <BoxGlyph />
                <NavLabel><Fit w={w}>{name}</Fit></NavLabel>
                {more && <BoxGlyph size={16} color="#fff" heavy />}
              </NavItem>
            ))}
          </Sidebar>
          <Main>
            <TitleBar><Fit w={75}>Home</Fit></TitleBar>
            <Card>
              <CardHeader><Fit w={193.500}>Adding Employee Mapping</Fit></CardHeader>
              <CardBody>
                <H1 $m="0 0 18.5px"><Fit w={473}>The Feature We Implemented</Fit></H1>
                <Copy><Fit w={501}>We added the employee location map using the map chart region within APEX.</Fit></Copy>
                <Copy>
                  <Fit w={747}>The map chart allows users to aggregate data by location at a state, country, or worldwide level. We chose to use the</Fit>
                  <Fit w={748}>United States as the total region and aggregate the project employees and managers by state. This allows us to easily</Fit>
                  <Fit w={632}>view the total number of project employees and managers per state from the top level People page.</Fit>
                </Copy>
                <Copy>
                  <Fit w={753.500}>The map chart returns data based on a simple SQL query, grouping and counting project employees and managers by</Fit>
                  <Fit w={110}>state in our case.</Fit>
                </Copy>
                <H1 $m="43px 0 33px"><Fit w={461}>Steps to Creating Map Chart</Fit></H1>
                <StepTitle><Fit w={91}>Step 1:</Fit></StepTitle>
                <StepText><Fit w={424}>Create a new region and select "Map Chart".</Fit></StepText>
                <RegionTypes />
                <StepTitle><Fit w={91}>Step 2:</Fit></StepTitle>
                <StepText><Fit w={548}>Select "United States of America". It is the default choice.</Fit></StepText>
                <MapTypes />
                <StepTitle><Fit w={91}>Step 3:</Fit></StepTitle>
                <StepText><Fit w={342}>Select "United States" and "States".</Fit></StepText>
                <MapTree />
                <StepTitle><Fit w={91}>Step 4:</Fit></StepTitle>
                <StepText><Fit w={534}>In the Build Query box, enter the query as shown below.</Fit></StepText>
                <QueryStep />
                <StepTitle><Fit w={91}>Step 5:</Fit></StepTitle>
                <StepText>
                  <Fit w={448}>Finish going through the region creator wizard.</Fit>
                  <Fit w={714}>In the 'Region' section of the page, change 'Undefined Map Region' so that</Fit>
                  <Fit w={349}>undefined regions do not have color.</Fit>
                </StepText>
                <ColorScheme />
                <StepTitle><Fit w={91}>Step 6:</Fit></StepTitle>
                <StepText>
                  <Fit w={657}>While still in the 'Region' section, change the 'Refresh' option so that</Fit>
                  <Fit w={302}>'Asynchronous Update' is 'yes'.</Fit>
                  <Fit w={695}>This allows for the map to be updated as new entries are entered without</Fit>
                  <Fit w={192}>refreshing the page.</Fit>
                </StepText>
                <RefreshStep />
                <StepTitle $top={11}><Fit w={82}>Finish!</Fit></StepTitle>
              </CardBody>
            </Card>
            <PageFooter>
              <TopCircle><BoxGlyph size={31} color="#ececec" heavy /></TopCircle>
              <Release><Fit w={54}>release 1.0</Fit><Fit w={144} $link>Set Screen Reader Mode On</Fit></Release>
            </PageFooter>
          </Main>
        </Columns>
      </Page>
    </>
  );
}
